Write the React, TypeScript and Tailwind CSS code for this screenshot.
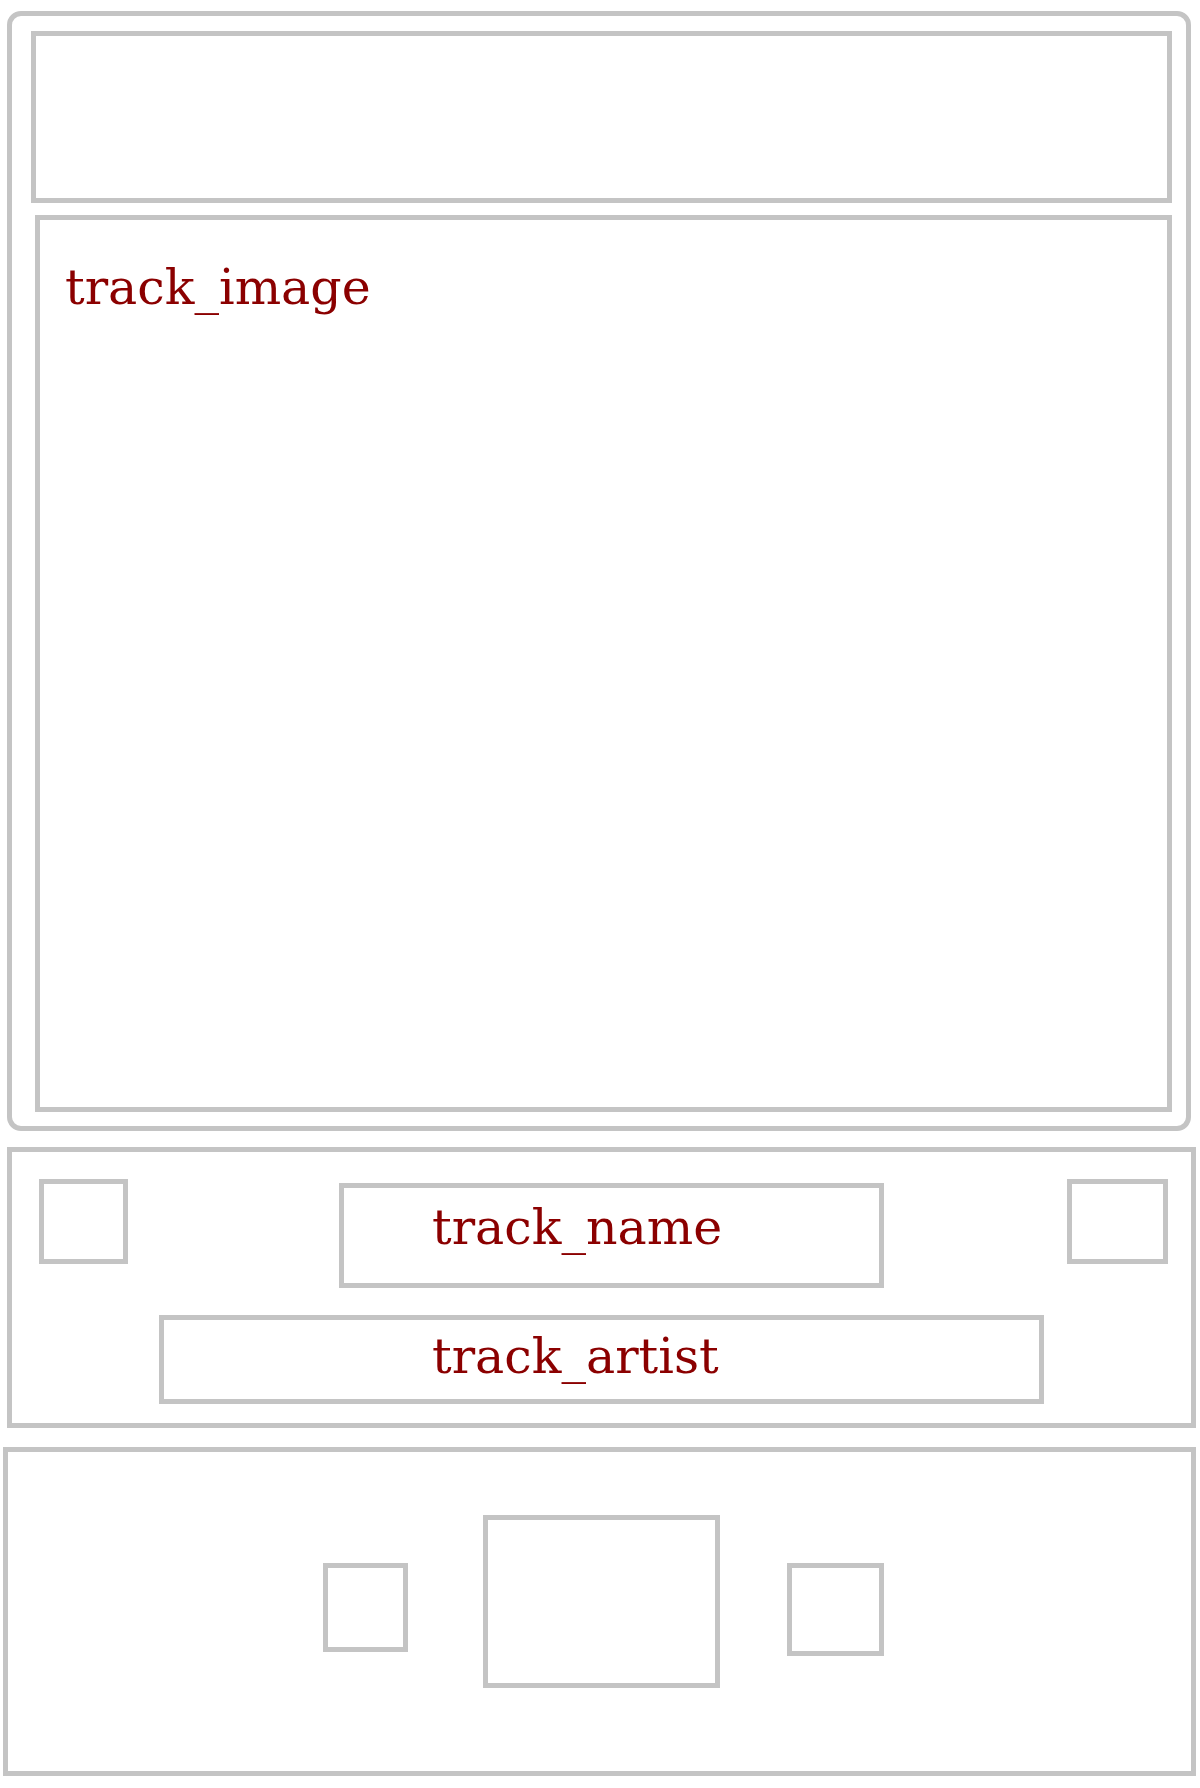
import React from 'react';

const label = "font-['DejaVu_Serif',serif] text-[49px] leading-none text-[#8b0000]";
const box = 'border-[5px] border-[#c4c4c4]';

export default function App() {
  return (
    <div className="w-[1200px] h-[1788px] bg-white flex flex-col">
      {/* artwork card */}
      <div className={`${box} ml-[7px] mt-[11px] w-[1184px] h-[1120px] rounded-[14px] pl-[19px] pt-[15px] flex flex-col`}>
        <div className={`${box} w-[1141px] h-[172px] shrink-0`} />
        <div className={`${box} ml-[4px] mt-[12px] w-[1137px] h-[897px] shrink-0 pl-[25px] pt-[43px]`}>
          <p className={label}>track_image</p>
        </div>
      </div>

      {/* track info */}
      <div className={`${box} ml-[7px] mt-[16px] w-[1189px] h-[281px] pl-[27px] pt-[27px] flex flex-col`}>
        <div className="flex items-start">
          <div className={`${box} w-[89px] h-[85px] shrink-0`} />
          <div className={`${box} ml-[211px] mt-[4px] w-[545px] h-[105px] shrink-0 pl-[88px] pt-[15px]`}>
            <p className={label}>track_name</p>
          </div>
          <div className={`${box} ml-[183px] w-[101px] h-[85px] shrink-0`} />
        </div>
        <div className={`${box} ml-[120px] mt-[27px] w-[885px] h-[89px] shrink-0 pl-[268px] pt-[12px]`}>
          <p className={label}>track_artist</p>
        </div>
      </div>

      {/* controls */}
      <div className={`${box} ml-[3px] mt-[19px] w-[1193px] h-[329px] pl-[315px] flex items-start`}>
        <div className={`${box} mt-[111px] w-[85px] h-[89px] shrink-0`} />
        <div className={`${box} ml-[75px] mt-[63px] w-[237px] h-[173px] shrink-0`} />
        <div className={`${box} ml-[67px] mt-[111px] w-[97px] h-[93px] shrink-0`} />
      </div>
    </div>
  );
}
